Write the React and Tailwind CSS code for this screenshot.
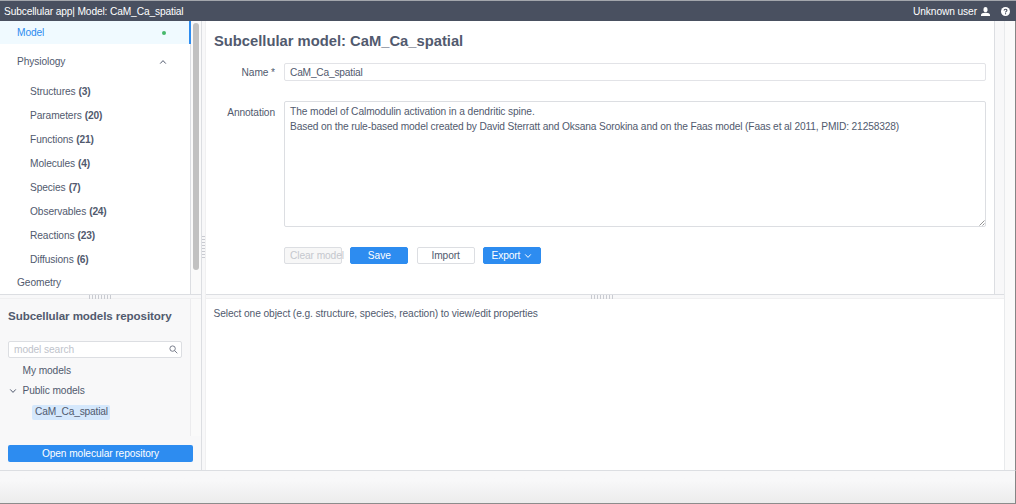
import React from "react";

const items = [
  ["Structures", 3],
  ["Parameters", 20],
  ["Functions", 21],
  ["Molecules", 4],
  ["Species", 7],
  ["Observables", 24],
  ["Reactions", 23],
  ["Diffusions", 6],
];

function Chevron({ up = false, className = "" }) {
  return (
    <svg width="8" height="6" viewBox="0 0 8 6" fill="none" stroke="currentColor" strokeWidth="1" className={className}>
      <path d={up ? "M1.2 4.6 4 1.6l2.8 3" : "M1.2 1.4 4 4.4l2.8-3"} />
    </svg>
  );
}

function Header() {
  return (
    <header className="flex h-[21px] shrink-0 items-center justify-between border-t border-[#a3a6ac] bg-[#495060] pl-[4px] pr-[6px] pt-px text-white">
      <span className="tracking-[-0.13px]">Subcellular app| Model: CaM_Ca_spatial</span>
      <div className="flex items-center">
        <span>Unknown user</span>
        <svg width="9" height="9" viewBox="0 0 9 9" fill="currentColor" className="ml-[4px]">
          <rect x="2.5" y="0" width="4" height="5.2" rx="2" />
          <path d="M0 9V7.6C0 6.6 2 6 3.6 5.8h1.8C7 6 9 6.6 9 7.6V9z" />
        </svg>
        <svg width="9" height="9" viewBox="0 0 9 9" className="ml-[11px]">
          <circle cx="4.5" cy="4.5" r="4.5" fill="white" />
          <path d="M3.1 3.6C3.1 1.7 5.9 1.8 5.9 3.4 5.9 4.4 4.5 4.3 4.5 5.5" fill="none" stroke="#495060" strokeWidth="1.1" />
          <rect x="4" y="6.2" width="1.1" height="1.1" fill="#495060" />
        </svg>
      </div>
    </header>
  );
}

function Menu() {
  return (
    <div className="flex h-[273px] shrink-0 overflow-hidden bg-white">
      <nav className="w-[191px] border-r border-[#dcdee2]">
        <div className="-mr-px flex h-[23px] items-center justify-between border-r-2 border-[#2d8cf0] bg-[#f0faff] pl-[17px] pr-[23px] text-[#2d8cf0]">
          <span>Model</span>
          <span className="size-[4px] rounded-full bg-[#47b86b]" />
        </div>
        <div className="flex h-[36px] items-center justify-between pl-[17px] pr-[23px]">
          <span>Physiology</span>
          <Chevron up />
        </div>
        {items.map(([name, count]) => (
          <div key={name} className="flex h-6 items-center gap-[3px] pl-[30px]">
            <span>{name}</span>
            <b className="tracking-[-0.2px]">({count})</b>
          </div>
        ))}
        <div className="flex h-[22px] items-center pl-[17px]">Geometry</div>
      </nav>
      <div className="flex-1 bg-[#fafafa] pl-[2px] pt-[2px]">
        <div className="h-[247px] w-[6px] rounded-full bg-[#c1c1c1]" />
      </div>
    </div>
  );
}

function HSplit({ handle }) {
  return (
    <div className="flex h-[5px] shrink-0 items-start border-b border-t border-b-[#f0f0f1] border-t-[#dcdee2] bg-[#f8f8f9]">
      <div className={`flex h-[4px] gap-[2px] ${handle}`}>
        {[0, 1, 2, 3, 4, 5, 6, 7].map((i) => (
          <i key={i} className="w-px bg-[#c9cbd1]" />
        ))}
      </div>
    </div>
  );
}

function Repository() {
  return (
    <div className="flex flex-1 flex-col bg-[#f8f8f9]">
      <div className="flex h-[137px]">
        <div className="w-[191px] border-r border-[#ececee] pl-[8px] pr-[8px]">
          <h2 className="mt-[7px] h-[20px] whitespace-nowrap text-[11.6px] font-bold leading-[20px]">Subcellular models repository</h2>
          <div className="mt-[15px] flex h-[17px] w-[174px] items-center justify-between rounded-[2px] border border-[#dcdee2] bg-white pl-[5px] pr-[3px]">
            <span className="text-[#c0c3cb]">model search</span>
            <svg width="9" height="9" viewBox="0 0 9 9" fill="none" stroke="#6b7180" strokeWidth="0.9">
              <circle cx="3.6" cy="3.6" r="2.7" />
              <path d="M5.6 5.6 8.3 8.3" />
            </svg>
          </div>
          <div className="mt-[3px] flex h-[20px] items-center pl-[14.5px]">My models</div>
          <div className="flex h-[20px] items-center pl-px">
            <Chevron />
            <span className="ml-[5.5px]">Public models</span>
          </div>
          <div className="mt-px flex h-[20px] items-center pl-[24px]">
            <span className="flex h-[15px] w-[78px] items-center rounded-[2px] bg-[#d5e8fc] pl-[3px] tracking-[-0.17px]">CaM_Ca_spatial</span>
          </div>
        </div>
        <div className="flex-1 bg-[#fafafa]" />
      </div>
      <button className="ml-[8px] mt-[9px] h-[17px] w-[185px] rounded-[2px] bg-[#2d8cf0] text-white">Open molecular repository</button>
    </div>
  );
}

const btn = "flex h-[17px] w-[58px] items-center whitespace-nowrap rounded-[2px] border";

function Editor() {
  return (
    <div className="flex h-[273px] shrink-0 bg-white">
      <div className="flex-1 pl-[8px] pr-[8px] pt-[9px]">
        <h1 className="h-[22px] text-[14.75px] font-bold leading-[22px] tracking-normal">Subcellular model: CaM_Ca_spatial</h1>
        <div className="mt-[11px] flex h-[18px]">
          <span className="w-[70px] pr-[9px] text-right leading-[19px]">Name *</span>
          <div className="flex-1 rounded-[2px] border border-[#e2e3e7] pl-[5px] leading-[17px] tracking-[-0.2px]">CaM_Ca_spatial</div>
        </div>
        <div className="mt-[20px] flex h-[126px]">
          <span className="w-[70px] pr-[9px] pt-[5px] text-right">Annotation</span>
          <div className="relative flex-1 rounded-[2px] border border-[#dcdee2] pl-[5px] pt-[2px] leading-[15px]">
            <p>The model of Calmodulin activation in a dendritic spine.</p>
            <p className="whitespace-nowrap tracking-[-0.13px]">
              Based on the rule-based model created by David Sterratt and Oksana Sorokina and on the Faas model (Faas et al 2011, PMID: 21258328)
            </p>
            <svg width="6" height="6" viewBox="0 0 6 6" className="absolute bottom-0 right-0" stroke="#777" strokeWidth="0.8">
              <path d="M0.5 5.5l5-5M3.5 5.5l2-2" />
            </svg>
          </div>
        </div>
        <div className="mt-[20px] flex gap-[8.3px] pl-[70px]">
          <div className={`${btn} border-[#dcdee2] bg-[#f7f7f7] pl-[5px] text-[#c5c8ce]`}>Clear model</div>
          <div className={`${btn} justify-center border-[#2d8cf0] bg-[#2d8cf0] text-white`}>Save</div>
          <div className={`${btn} justify-center border-[#dcdee2] bg-white`}>Import</div>
          <div className={`${btn} justify-center gap-[4px] border-[#2d8cf0] bg-[#2d8cf0] text-white`}>
            Export
            <Chevron />
          </div>
        </div>
      </div>
      <div className="w-[10px] border-l border-[#dcdee2] bg-[#f8f8f9]" />
    </div>
  );
}

function VSplit() {
  return (
    <div className="flex w-[5px] shrink-0 flex-col border-l border-r border-l-[#dcdee2] border-r-[#f0f0f1] bg-[#f8f8f9]">
      <div className="mt-[215px] flex flex-col gap-[2px]">
        {[0, 1, 2, 3, 4, 5, 6, 7].map((i) => (
          <i key={i} className="h-px bg-[#c9cbd1]" />
        ))}
      </div>
    </div>
  );
}

export default function App() {
  return (
    <div className="flex h-[504px] w-[1016px] flex-col overflow-hidden bg-[#f8f8f9] font-['Liberation_Sans',Arial,sans-serif] text-[10.2px] leading-[14px] tracking-[-0.09px] text-[#515a6e]">
      <Header />
      <div className="flex h-[449px] shrink-0">
        <div className="flex w-[201px] shrink-0 flex-col">
          <Menu />
          <HSplit handle="ml-[89px]" />
          <Repository />
        </div>
        <VSplit />
        <div className="flex w-[799px] shrink-0 flex-col border-r border-[#e8eaec]">
          <Editor />
          <HSplit handle="ml-[385px]" />
          <div className="flex-1 bg-white pl-[7.5px] pt-[8px]">Select one object (e.g. structure, species, reaction) to view/edit properties</div>
        </div>
        <div className="flex-1 border-r border-[#858585] bg-[#fafafa]" />
      </div>
      <footer className="flex-1 border-b border-r border-t border-b-[#8c8c8c] border-r-[#858585] border-t-[#dcdee2] bg-linear-to-b from-[#f8f8f9] from-30% to-[#ececec]" />
    </div>
  );
}
